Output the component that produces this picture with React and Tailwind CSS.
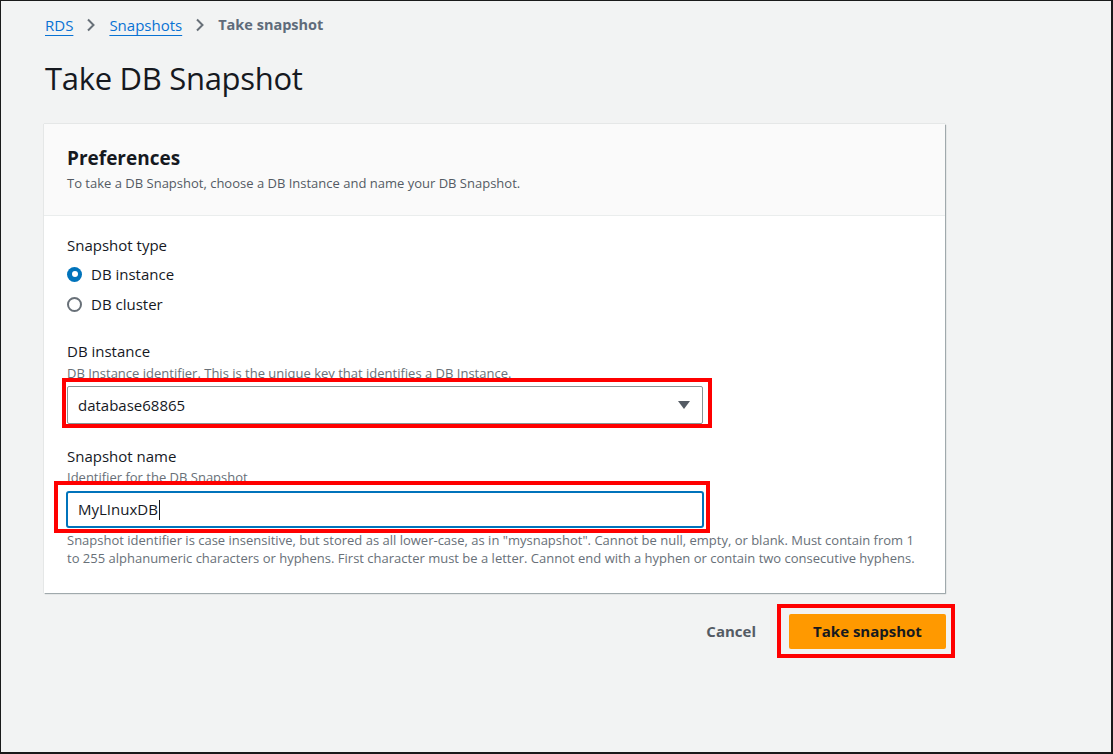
import React from "react";

function Chevron() {
  return (
    <svg width="10" height="14" viewBox="0 0 10 14" className="mx-[13px]">
      <path d="M2 1.5 L7.5 7 L2 12.5" fill="none" stroke="#687078" strokeWidth="2" />
    </svg>
  );
}

export default function App() {
  return (
    <div
      className="w-[1113px] h-[754px] bg-[#f2f3f3] border-t border-l border-r-2 border-b-2 border-[#1a1a1a] overflow-hidden text-[#16191f]"
      style={{ fontFamily: '"Open Sans", "Noto Sans", sans-serif' }}
    >
      <div className="pl-[44px] pt-[13px]">
        {/* Breadcrumb */}
        <div className="flex items-center text-[15px] leading-[22px]">
          <span className="text-[#0972d3] underline underline-offset-[4px] decoration-1">RDS</span>
          <Chevron />
          <span className="text-[#0972d3] underline underline-offset-[4px] decoration-1">Snapshots</span>
          <Chevron />
          <span className="text-[#5f6b7a] font-bold text-[14.5px]">Take snapshot</span>
        </div>

        {/* Title */}
        <h1 className="mt-[22px] text-[31px] leading-[40px] font-normal tracking-[-0.3px]">Take DB Snapshot</h1>

        {/* Card */}
        <div className="mt-[26px] -ml-[1px] w-[901px] bg-white shadow-[1px_1px_1px_0_rgba(0,28,36,0.3),0_0_1px_0_rgba(0,28,36,0.3)]">
          <div className="bg-[#fafafa] border-b border-[#eaeded] h-[92px] px-[23px] pt-[22px]">
            <div className="text-[19px] leading-[24px] font-bold">Preferences</div>
            <div className="text-[13px] leading-[18px] text-[#545b64] mt-[4px]">
              To take a DB Snapshot, choose a DB Instance and name your DB Snapshot.
            </div>
          </div>

          <div className="px-[23px] pt-[18px] pb-[26px] text-[15px]">
            <div className="leading-[22px]">Snapshot type</div>
            <div className="mt-[7px] flex items-center h-[22px]">
              <span className="w-[15px] h-[15px] rounded-full bg-[#0073bb] flex items-center justify-center">
                <span className="w-[6px] h-[6px] rounded-full bg-white" />
              </span>
              <span className="ml-[9px] leading-[22px]">DB instance</span>
            </div>
            <div className="mt-[8px] flex items-center h-[22px]">
              <span className="w-[15px] h-[15px] rounded-full border-2 border-[#687078] bg-white" />
              <span className="ml-[9px] leading-[22px]">DB cluster</span>
            </div>

            <div className="mt-[25px] leading-[22px]">DB instance</div>
            <div className="text-[13px] leading-[18px] text-[#687078] mt-[2px]">
              DB Instance identifier. This is the unique key that identifies a DB Instance.
            </div>
            <div className="relative mt-[4px] w-[636px]">
              <div className="h-[38px] border border-[#879596] rounded-[2px] flex items-center justify-between pl-[10px] pr-[11px]">
                <span className="text-[15px]">database68865</span>
                <svg width="14" height="10" viewBox="0 0 14 10">
                  <path d="M1 1 H13 L7 9 Z" fill="#545b64" />
                </svg>
              </div>
              <div className="absolute -left-[5px] -top-[8px] w-[650px] h-[50px] border-[4px] border-[#ff0000] pointer-events-none" />
            </div>

            <div className="mt-[21px] leading-[22px]">Snapshot name</div>
            <div className="text-[13px] leading-[18px] text-[#687078] mt-[1px]">Identifier for the DB Snapshot</div>
            <div className="relative mt-[5px] -ml-[1px] w-[638px]">
              <div className="h-[37px] border-2 border-[#0073bb] rounded-[3px] flex items-center pl-[10px]">
                <span className="text-[15px]">MyLInuxDB</span>
                <span className="w-px h-[20px] bg-[#16191f] ml-[1px]" />
              </div>
              <div className="absolute -left-[12px] -top-[10px] w-[656px] h-[52px] border-[4px] border-[#ff0000] pointer-events-none" />
            </div>
            <div className="mt-[3px] text-[13px] leading-[18px] text-[#687078]">
              Snapshot identifier is case insensitive, but stored as all lower-case, as in "mysnapshot". Cannot be null, empty, or blank. Must contain from 1 to 255 alphanumeric characters or hyphens. First character must be a letter. Cannot end with a hyphen or contain two consecutive hyphens.
            </div>
          </div>
        </div>

        {/* Actions */}
        <div className="w-[901px] flex items-center justify-end mt-[21px]">
          <span className="text-[15px] font-bold text-[#545b64] mr-[33px]">Cancel</span>
          <div className="relative">
            <div className="w-[157px] h-[35px] bg-[#ff9900] rounded-[2px] flex items-center justify-center text-[15px] font-bold text-[#16191f]">
              Take snapshot
            </div>
            <div className="absolute -left-[12px] -top-[10px] w-[178px] h-[54px] border-[4px] border-[#ff0000] pointer-events-none" />
          </div>
        </div>
      </div>
    </div>
  );
}
